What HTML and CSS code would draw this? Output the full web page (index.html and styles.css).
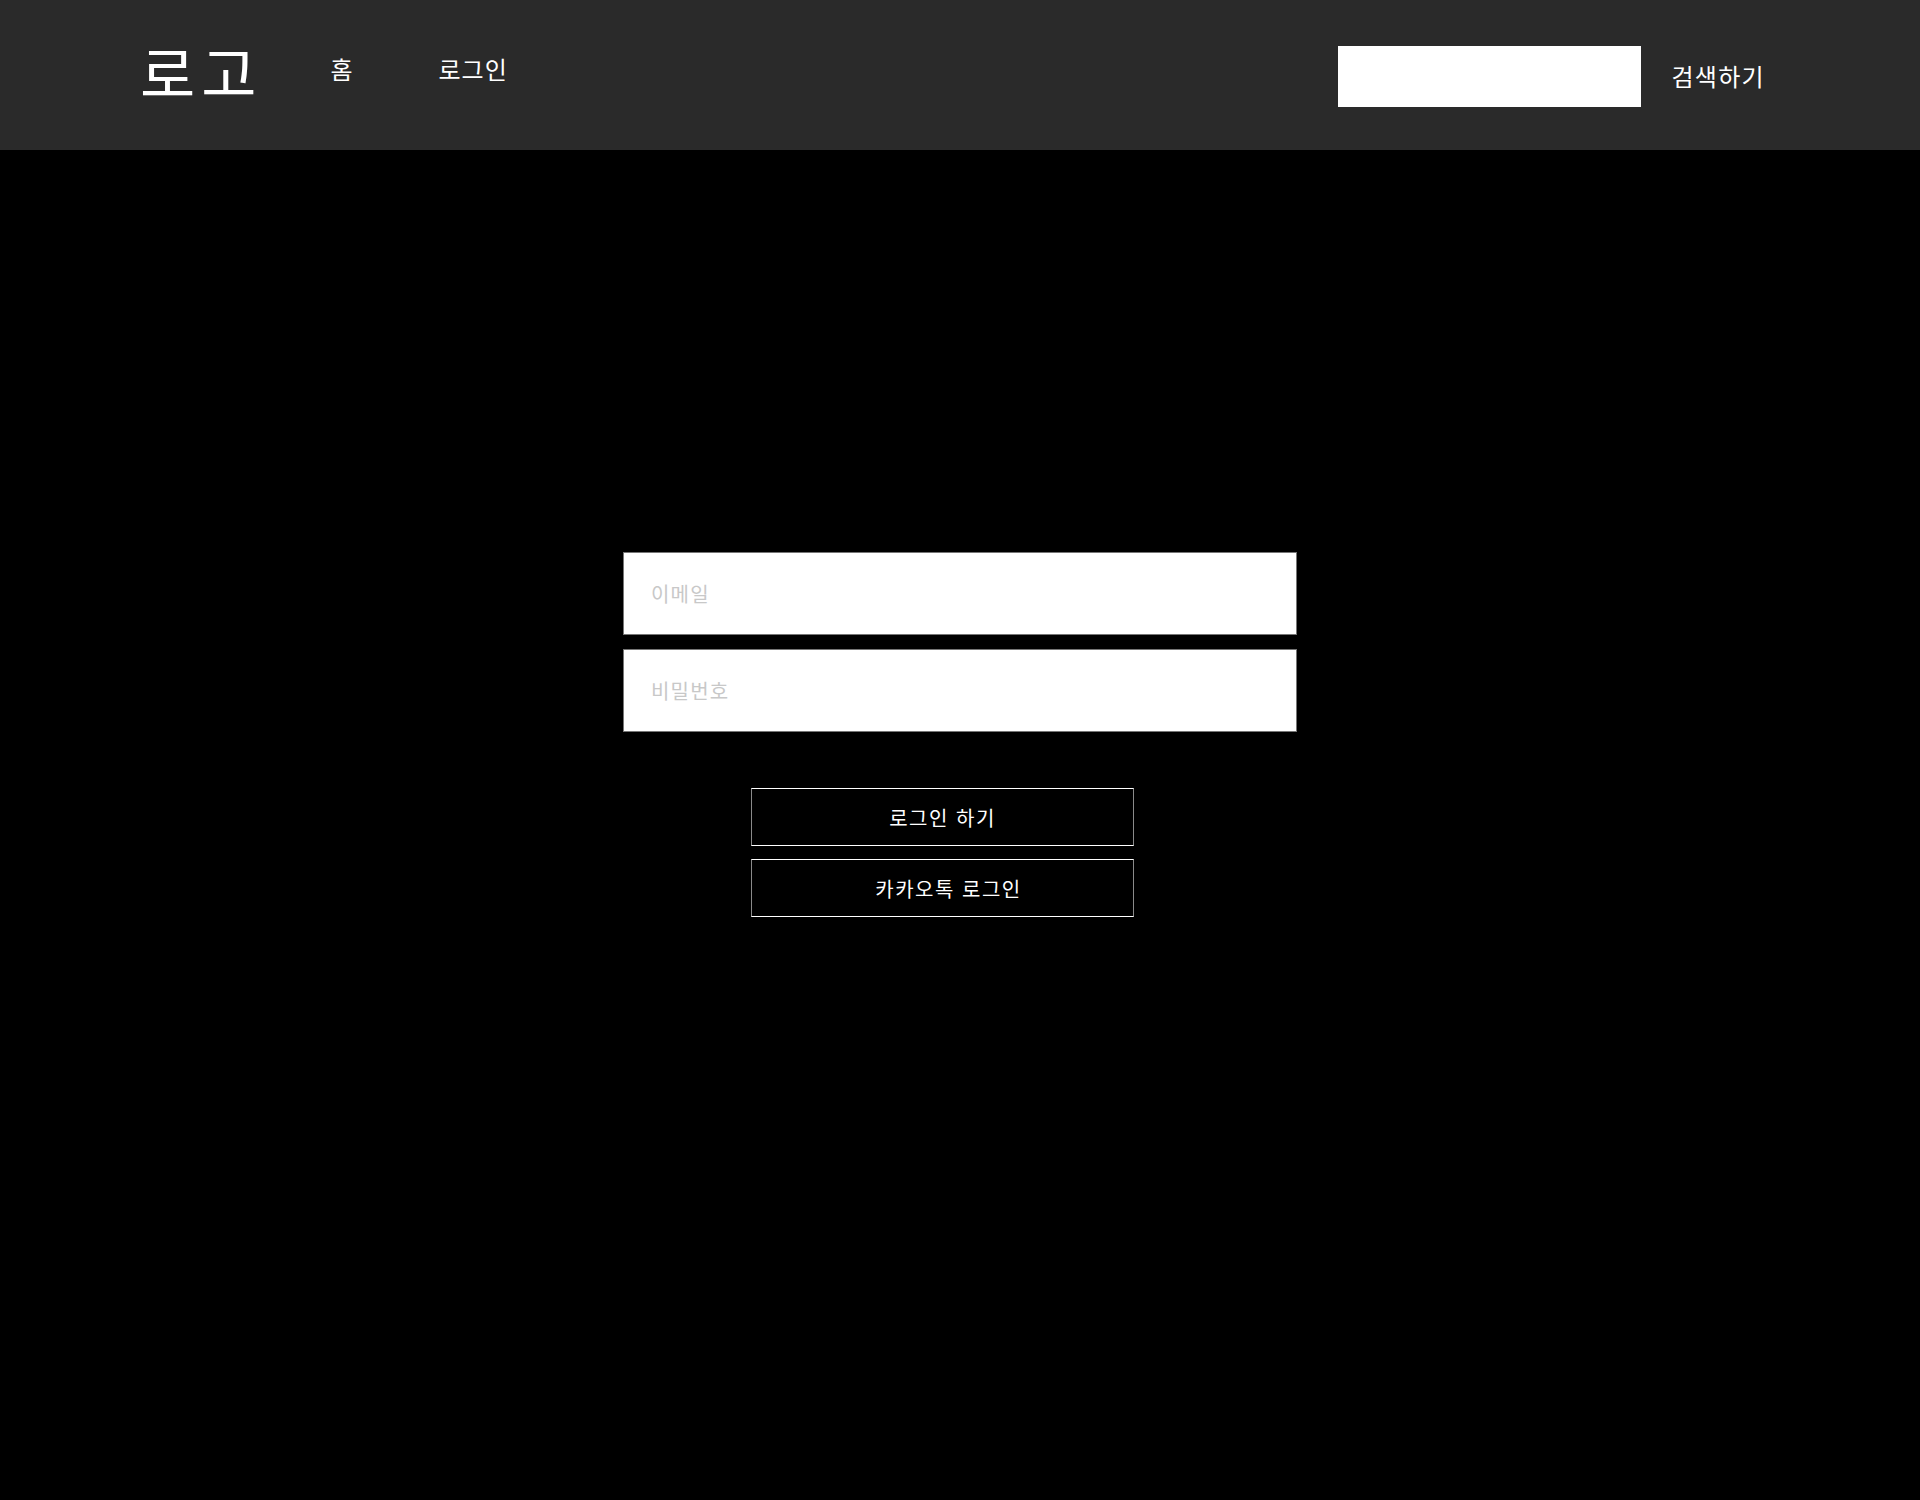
FILE: index.html
```html
<!DOCTYPE html>
<html lang="ko">
<head>
<meta charset="utf-8">
<title>로그인</title>
<link rel="stylesheet" href="styles.css">
</head>
<body>
<header class="header">
  <div class="header-left">
    <a class="logo" href="#">로고</a>
    <nav class="nav">
      <a class="nav-link nav-home" href="#">홈</a>
      <a class="nav-link" href="#">로그인</a>
    </nav>
  </div>
  <div class="header-right">
    <input class="search-input" type="text">
    <button class="search-btn" type="button">검색하기</button>
  </div>
</header>
<main class="main">
  <form class="login-form">
    <input class="field" type="email" placeholder="이메일">
    <input class="field" type="password" placeholder="비밀번호">
    <div class="actions">
      <button class="action-btn" type="button">로그인 하기</button>
      <button class="action-btn action-kakao" type="button">카카오톡 로그인</button>
    </div>
  </form>
</main>
</body>
</html>
```

FILE: styles.css
```css
* { box-sizing: border-box; }
html, body {
  margin: 0;
  padding: 0;
  background: #000;
  min-height: 1500px;
  font-family: "Noto Sans CJK KR", "Noto Sans", sans-serif;
  color: #fff;
}
a { color: #fff; text-decoration: none; }

.header {
  height: 150px;
  background: #2a2a2a;
  display: flex;
  justify-content: space-between;
  align-items: flex-start;
  padding: 0 155px 0 140px;
}
.header-left {
  display: flex;
  align-items: center;
  height: 141px;
}
.logo {
  font-size: 60px;
  line-height: 1;
  letter-spacing: 6px;
  display: block;
}
.nav {
  display: flex;
  align-items: center;
  margin-left: 68px;
  margin-bottom: 4px;
}
.nav-link {
  font-size: 24px;
  line-height: 1;
  letter-spacing: 1px;
}
.nav-home { margin-right: 85px; }

.header-right {
  display: flex;
  align-items: center;
  height: 153px;
}
.search-input {
  width: 303px;
  height: 61px;
  border: none;
  background: #fff;
  margin: 0;
  padding: 0 10px;
  font-family: inherit;
  font-size: 20px;
}
.search-btn {
  background: none;
  border: none;
  color: #fff;
  font-family: inherit;
  font-size: 24px;
  line-height: 1;
  letter-spacing: 1.3px;
  padding: 0;
  margin-left: 30px;
  margin-bottom: 2px;
  cursor: pointer;
}

.main {
  padding-top: 402px;
}
.login-form {
  width: 674px;
  margin: 0 auto;
  display: flex;
  flex-direction: column;
  gap: 14px;
}
.field {
  width: 674px;
  height: 83px;
  margin: 0;
  border: 1px solid #767676;
  background: #fff;
  padding: 0 27px;
  font-family: inherit;
  font-size: 20px;
  letter-spacing: 1.2px;
  color: #000;
}
.field::placeholder { color: #c8c8c8; }

.actions {
  display: flex;
  flex-direction: column;
  gap: 13px;
  margin-top: 42px;
  margin-left: 128px;
  width: 383px;
}
.action-btn {
  height: 58px;
  background: #000;
  border: 1px solid #fff;
  border-left-color: #8a8a8a;
  border-right-color: #8a8a8a;
  color: #fff;
  font-family: inherit;
  font-size: 20px;
  letter-spacing: 1.5px;
  padding: 0;
  cursor: pointer;
}
.action-kakao { padding-left: 12px; }
```
